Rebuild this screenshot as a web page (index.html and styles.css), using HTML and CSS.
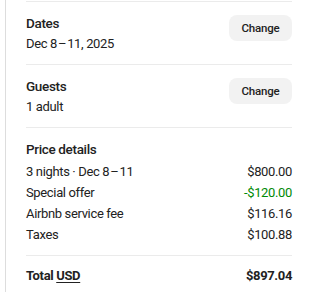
FILE: index.html
```html
<!DOCTYPE html>
<html>
<head>
<meta charset="utf-8">
<link rel="stylesheet" href="styles.css">
</head>
<body>
<div class="panel">
  <div class="inner">
    <section class="row-section">
      <div class="info">
        <div class="title">Dates</div>
        <div class="value">Dec 8&#8202;–&#8202;11, 2025</div>
      </div>
      <button class="btn">Change</button>
    </section>
    <section class="row-section">
      <div class="info">
        <div class="title">Guests</div>
        <div class="value">1 adult</div>
      </div>
      <button class="btn">Change</button>
    </section>
    <section class="price">
      <div class="title">Price details</div>
      <div class="line"><span>3 nights · Dec 8&#8202;–&#8202;11</span><span>$800.00</span></div>
      <div class="line"><span>Special offer</span><span class="green">-$120.00</span></div>
      <div class="line"><span>Airbnb service fee</span><span>$116.16</span></div>
      <div class="line"><span>Taxes</span><span>$100.88</span></div>
    </section>
    <section class="total">
      <span class="tl">Total <u>USD</u></span>
      <span class="tl">$897.04</span>
    </section>
  </div>
</div>
</body>
</html>
```

FILE: styles.css
```css
html, body {
  margin: 0;
  padding: 0;
  background: #fff;
}
body {
  font-family: Roboto, "Noto Sans", sans-serif;
  font-size: 13px;
  letter-spacing: -0.35px;
  color: #222;
}
.panel {
  margin-left: 5px;
  border-left: 1px solid #dddddd;
  height: 292px;
  padding: 1px 17px 0 20px;
}
.inner section {
  border-top: 1px solid #ebebeb;
}
.row-section {
  display: flex;
  justify-content: space-between;
  align-items: flex-start;
  padding: 11px 0 9px;
  height: 42px;
}
.title {
  font-weight: 500;
  font-size: 13.5px;
  line-height: 20px;
}
.value {
  line-height: 20px;
  margin-top: 1px;
}
.btn {
  margin-top: 2px;
  height: 26px;
  width: 63px;
  border: none;
  border-radius: 8px;
  background: #f2f2f2;
  font-family: inherit;
  font-size: 11.5px;
  font-weight: 500;
  letter-spacing: -0.2px;
  color: #222;
  padding: 0;
}
.price {
  padding: 11px 0 10px;
}
.price .title {
  margin-bottom: 2px;
}
.line {
  display: flex;
  justify-content: space-between;
  line-height: 21px;
}
.green {
  color: #008a05;
}
.total {
  display: flex;
  justify-content: space-between;
  padding: 10px 0;
  line-height: 20px;
}
.tl {
  font-weight: 700;
}
.tl u {
  text-decoration-thickness: 1px;
  text-underline-offset: 2px;
}
```
